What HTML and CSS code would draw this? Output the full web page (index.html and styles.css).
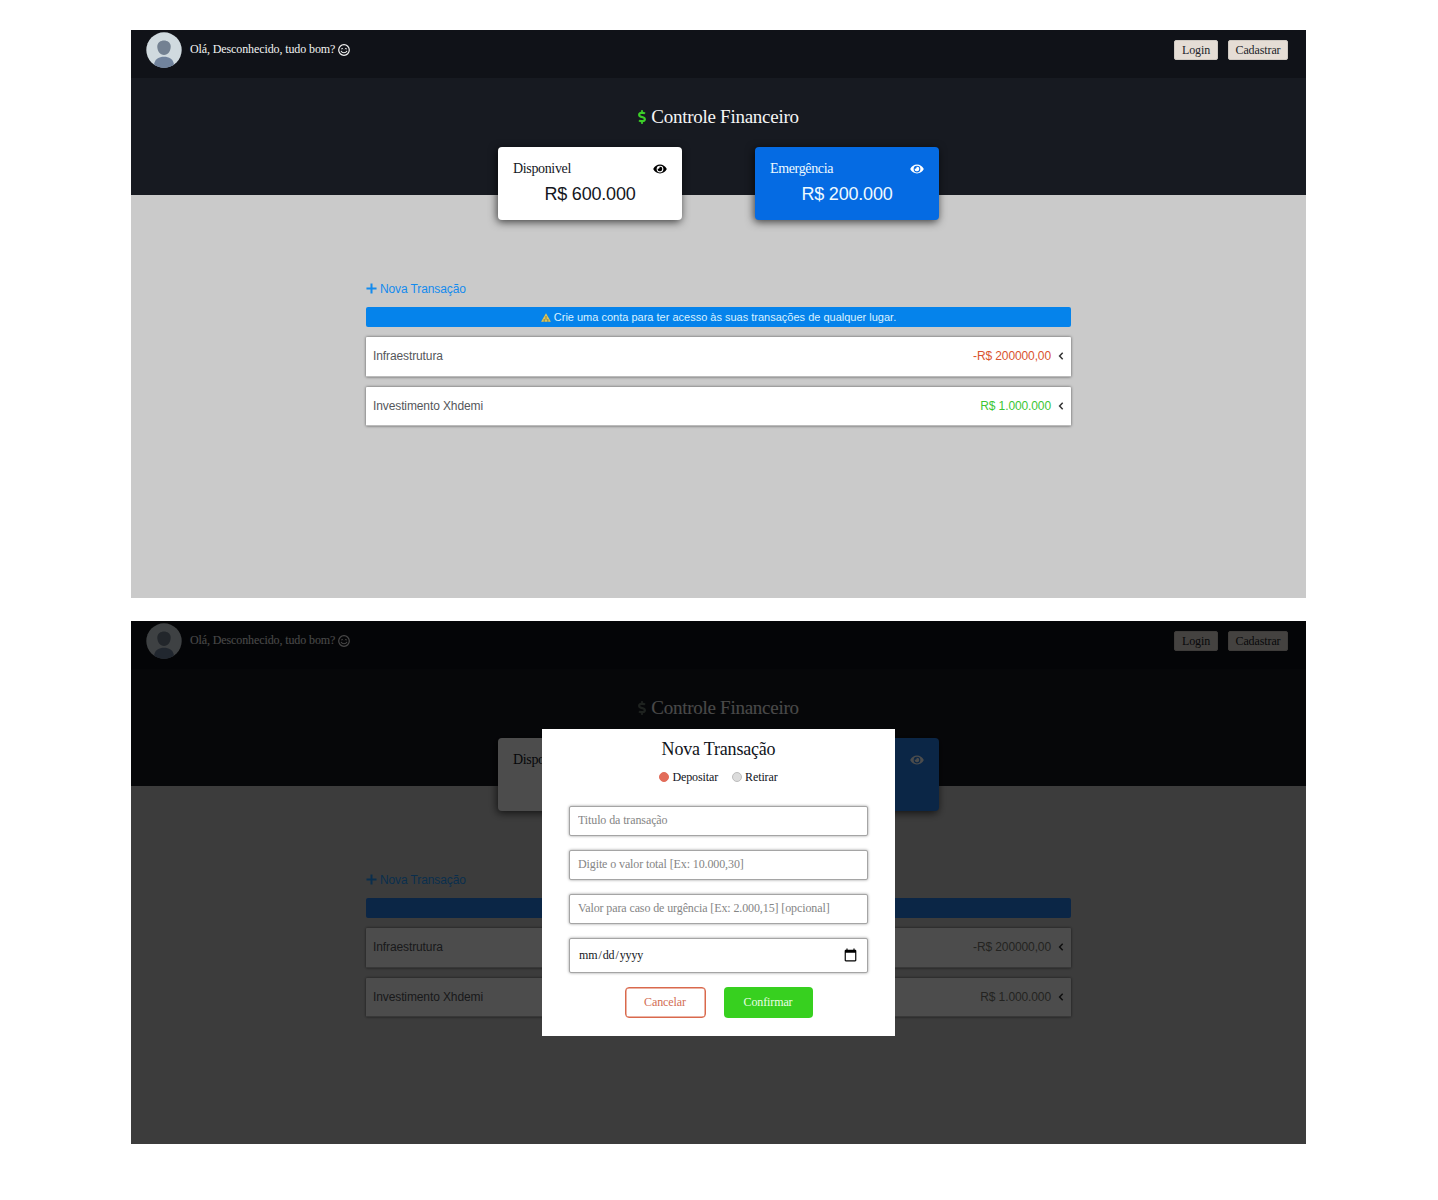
FILE: index.html
```
<!DOCTYPE html>
<html lang="pt-BR">
<head>
<meta charset="utf-8">
<title>Controle Financeiro</title>
<link rel="stylesheet" href="styles.css">
</head>
<body>
<svg class="sprite" aria-hidden="true">
  <symbol id="eye" viewBox="0 0 576 512"><path d="M572.5 241.4C518.3 135.600 410.900 64 288 64S57.700 135.600 3.500 241.400a32.400 32.400 0 0 0 0 29.200C57.700 376.400 165.100 448 288 448s230.300-71.600 284.500-177.400a32.400 32.400 0 0 0 0-29.200zM288 400a144 144 0 1 1 144-144 143.900 143.900 0 0 1-144 144zm0-240a95.300 95.300 0 0 0-25.300 3.800 47.900 47.900 0 0 1-66.900 66.900A95.800 95.800 0 1 0 288 160z"/></symbol>
  <symbol id="dollar" viewBox="0 0 288 512"><path d="M209.200 233.400l-108-31.600C88.700 198.200 80 186.500 80 173.500c0-16.300 13.200-29.500 29.500-29.500h66.300c12.200 0 24.200 3.700 34.200 10.500 6.100 4.100 14.300 3.100 19.500-2l34.800-34c7.100-6.900 6.100-18.400-1.800-24.500C238 74.800 207.400 64.100 176 64V16c0-8.800-7.200-16-16-16h-32c-8.800 0-16 7.200-16 16v48h-2.500C45.800 64-5.400 118.700.5 183.600c4.200 46.100 39.400 83.600 83.800 96.600l102.500 30c12.500 3.700 21.200 15.300 21.200 28.300 0 16.300-13.200 29.500-29.500 29.500h-66.300C100 368 88 364.300 78 357.500c-6.100-4.100-14.300-3.100-19.500 2l-34.800 34c-7.100 6.900-6.100 18.400 1.800 24.500 24.500 19.200 55.100 29.900 86.500 30v48c0 8.800 7.200 16 16 16h32c8.800 0 16-7.200 16-16v-48.200c46.600-.9 90.300-28.600 105.700-72.700 21.500-61.600-14.600-124.800-72.500-141.700z"/></symbol>
  <symbol id="smile" viewBox="0 0 24 24"><g fill="none" stroke="currentColor" stroke-linecap="round"><circle cx="12" cy="12" r="10.600" stroke-width="2.400"/><path d="M6.500 14.500c2 4 9 4 11 0" stroke-width="2.200"/><path d="M6.800 9.500q1.500-2 3 0M14.200 9.500q1.500-2 3 0" stroke-width="2"/></g></symbol>
  <symbol id="plus" viewBox="0 0 12 12"><path d="M4.900.5h2.200v4.400h4.400v2.200H7.100v4.400H4.900V7.100H.5V4.900h4.400z"/></symbol>
  <symbol id="chevron" viewBox="0 0 6 8"><path d="M4.700.8 1.600 4l3.100 3.200" fill="none" stroke="currentColor" stroke-width="1.500"/></symbol>
  <symbol id="avatar" viewBox="0 0 36 36"><circle cx="18" cy="18" r="17.700" fill="#d0dadf"/><path d="M11.300 14.500c0-8 13.400-8 13.400 0 0 4.500-2.700 8.500-6.700 8.500s-6.700-4-6.700-8.500z" fill="#738192"/><path d="M8 32.500c1-6 5-7.800 10-7.800s9 1.800 10 7.800c-6 4.500-14 4.500-20 0z" fill="#71839d"/></symbol>
</svg>

<main class="gallery">
  <section class="screen">
    <header class="topbar">
      <div class="user"><svg class="avatar"><use href="#avatar"/></svg><span class="greeting">Olá, Desconhecido, tudo bom?</span><svg class="smile"><use href="#smile"/></svg></div>
      <nav class="auth"><button class="auth-btn">Login</button><button class="auth-btn">Cadastrar</button></nav>
    </header>
    <div class="hero">
      <h1 class="title"><svg class="dollar"><use href="#dollar"/></svg>Controle Financeiro</h1>
      <div class="cards">
        <article class="card">
          <div class="card-head"><span>Disponivel</span><svg class="eye"><use href="#eye"/></svg></div>
          <p class="amount">R$ 600.000</p>
        </article>
        <article class="card card-blue">
          <div class="card-head"><span>Emergência</span><svg class="eye"><use href="#eye"/></svg></div>
          <p class="amount">R$ 200.000</p>
        </article>
      </div>
    </div>
    <div class="content">
      <a class="new"><svg class="plus"><use href="#plus"/></svg>Nova Transação</a>
      <div class="banner"><svg class="warn" viewBox="0 0 10 9"><path d="M5 .2 9.900 8.800H.1z" fill="#e2c452"/><path d="M5 3v3.800M3.200 6v2.800M6.800 6v2.800" stroke="#5d7560" stroke-width=".8"/></svg>Crie uma conta para ter acesso às suas transações de qualquer lugar.</div>
      <div class="row"><span>Infraestrutura</span><span class="value out">-R$ 200000,00</span><svg class="chevron"><use href="#chevron"/></svg></div>
      <div class="row"><span>Investimento Xhdemi</span><span class="value in">R$ 1.000.000</span><svg class="chevron"><use href="#chevron"/></svg></div>
    </div>
  </section>

  <section class="screen screen-modal">
    <header class="topbar">
      <div class="user"><svg class="avatar"><use href="#avatar"/></svg><span class="greeting">Olá, Desconhecido, tudo bom?</span><svg class="smile"><use href="#smile"/></svg></div>
      <nav class="auth"><button class="auth-btn">Login</button><button class="auth-btn">Cadastrar</button></nav>
    </header>
    <div class="hero">
      <h1 class="title"><svg class="dollar"><use href="#dollar"/></svg>Controle Financeiro</h1>
      <div class="cards">
        <article class="card">
          <div class="card-head"><span>Disponivel</span></div>
        </article>
        <article class="card card-blue">
          <div class="card-head"><svg class="eye"><use href="#eye"/></svg></div>
        </article>
      </div>
    </div>
    <div class="content">
      <a class="new"><svg class="plus"><use href="#plus"/></svg>Nova Transação</a>
      <div class="banner"></div>
      <div class="row"><span>Infraestrutura</span><span class="value out">-R$ 200000,00</span><svg class="chevron"><use href="#chevron"/></svg></div>
      <div class="row"><span>Investimento Xhdemi</span><span class="value in">R$ 1.000.000</span><svg class="chevron"><use href="#chevron"/></svg></div>
    </div>
    <div class="overlay">
      <form class="modal">
        <h2 class="modal-title">Nova Transação</h2>
        <div class="choices">
          <label class="choice"><i class="dot dot-on"></i>Depositar</label>
          <label class="choice"><i class="dot"></i>Retirar</label>
        </div>
        <input class="field" type="text" placeholder="Titulo da transação">
        <input class="field" type="text" placeholder="Digite o valor total [Ex: 10.000,30]">
        <input class="field" type="text" placeholder="Valor para caso de urgência [Ex: 2.000,15] [opcional]">
        <input class="field field-date" type="date">
        <div class="actions">
          <button class="btn cancel" type="button">Cancelar</button>
          <button class="btn confirm" type="button">Confirmar</button>
        </div>
      </form>
    </div>
  </section>
</main>
</body>
</html>
```
FILE: styles.css
```
* { box-sizing: border-box; margin: 0; padding: 0; }
body { background: #fff; font: 12px "Liberation Serif", serif; letter-spacing: -.11px; color: #10131a; }
button, input { letter-spacing: inherit; }
svg { display: block; fill: currentColor; flex: none; }
.sprite { position: absolute; width: 0; height: 0; }
.gallery { width: 1438px; height: 1200px; padding: 30px 132px 0 131px; display: flex; flex-direction: column; gap: 23px; }
.screen { position: relative; flex: none; height: 568px; background: #cacaca; overflow: hidden; }
.screen-modal { height: 523px; }

.topbar { height: 48px; background: #101218; display: flex; justify-content: space-between; align-items: flex-start; padding: 2px 18px 0 15px; color: #f2f2f2; }
.user { display: flex; align-items: center; height: 36px; }
.greeting { padding-bottom: 1px; }
.avatar { width: 36px; height: 36px; margin-right: 8px; }
.smile { width: 12px; height: 12px; margin: 0 0 1px 3px; }
.auth { display: flex; gap: 10px; padding-top: 8px; }
.auth-btn { width: 44px; height: 20px; border: 1px solid #cfc9c2; border-radius: 2px; background: #e5ddd5; font: inherit; line-height: 18px; color: #22242a; text-align: center; }
.auth-btn + .auth-btn { width: 60px; }

.hero { height: 116.500px; background: #171a21; padding-top: 27px; }
.title { display: flex; justify-content: center; align-items: center; height: 24px; font-size: 19px; letter-spacing: -.27px; font-weight: 400; color: #f5f5f5; }
.dollar { width: 8px; height: 14px; margin-right: 5px; color: #3ccf28; }
.cards { display: flex; justify-content: center; gap: 73px; padding-top: 18px; }
.card { width: 184px; height: 73px; border-radius: 4px; background: #fff; padding: 14px 15px; box-shadow: -1px 2px 9px rgba(0, 0, 0, .7); color: #14171e; }
.card-blue { background: #056be3; color: #eefaff; }
.card-head { display: flex; justify-content: space-between; align-items: center; height: 16px; font-size: 14px; letter-spacing: -.35px; }
.card-head .eye:only-child { margin-left: auto; }
.eye { width: 14px; height: 12px; color: #000; }
.card-blue .eye { color: #fff; }
.amount { font: 18px/24px "Liberation Sans", sans-serif; letter-spacing: -.2px; text-align: center; padding-top: 5px; }

.content { width: 705px; margin: 0 auto; padding-top: 86.500px; font-family: "Liberation Sans", sans-serif; }
.new { display: flex; align-items: center; height: 15px; margin-bottom: 11px; color: #138bee; }
.plus { width: 11px; height: 11px; margin-right: 3px; }
.banner { height: 20px; margin-bottom: 10px; border-radius: 2px; background: #0583eb; color: #d9f1ff; display: flex; align-items: center; justify-content: center; font-size: 11px; letter-spacing: 0; }
.warn { width: 10px; height: 9px; margin-right: 3px; }
.row { display: flex; align-items: center; height: 39.500px; padding: 0 7px; margin-bottom: 10px; background: #fff; border-bottom: 1px solid #bbb; border-radius: 1px; box-shadow: 0 0 3px rgba(0, 0, 0, .6); color: #55575b; }
.value { margin-left: auto; }
.out { color: #d9532f; }
.in { color: #3cc634; }
.chevron { width: 6px; height: 8px; margin-left: 7px; color: #333; }

.overlay { position: absolute; inset: 0; background: rgba(0, 0, 0, .7); padding-top: 108px; }
.screen-modal .dollar { color: #66736a; }
.screen-modal .in, .screen-modal .out { color: #77776e; }
.screen-modal .card-blue, .screen-modal .banner { background: #2580eb; }
.screen-modal .new { color: #259cff; }
.modal { width: 353px; height: 307px; margin: 0 auto; background: #fff; padding: 10px 27px 0; display: flex; flex-direction: column; }
.modal-title { font-size: 18px; letter-spacing: -.19px; line-height: 21px; font-weight: 400; text-align: center; }
.choices { display: flex; justify-content: center; gap: 14px; height: 14px; margin: 10px 0 22px; }
.choice { display: flex; align-items: center; gap: 3px; }
.dot { width: 10px; height: 10px; border-radius: 50%; background: #dcdcdc; border: 1px solid #bdbdbd; }
.dot-on { background: #e26c5a; border-color: #e26c5a; }
.field { flex: none; width: 299px; height: 30px; margin-bottom: 14px; padding: 0 7px 1px 8px; border: 1px solid #a5a5a5; border-radius: 2px; background: #fff; box-shadow: 0 0 3px rgba(0, 0, 0, .4); font: inherit; color: #15171c; outline: 0; }
.field::placeholder { color: #858585; }
.field-date { height: 35px; }
.field-date::-webkit-calendar-picker-indicator { width: 15px; height: 15px; padding: 0; margin-right: 2px; }
.actions { display: flex; justify-content: center; gap: 18px; }
.btn { height: 31px; border-radius: 4px; font: inherit; }
.cancel { width: 81px; border: 1px solid #d9694c; box-shadow: inset 0 0 0 .5px #d9694c; background: #fff; color: #d26d53; }
.confirm { width: 89px; border: 0; background: #37d01f; color: #eaffe5; }
```
